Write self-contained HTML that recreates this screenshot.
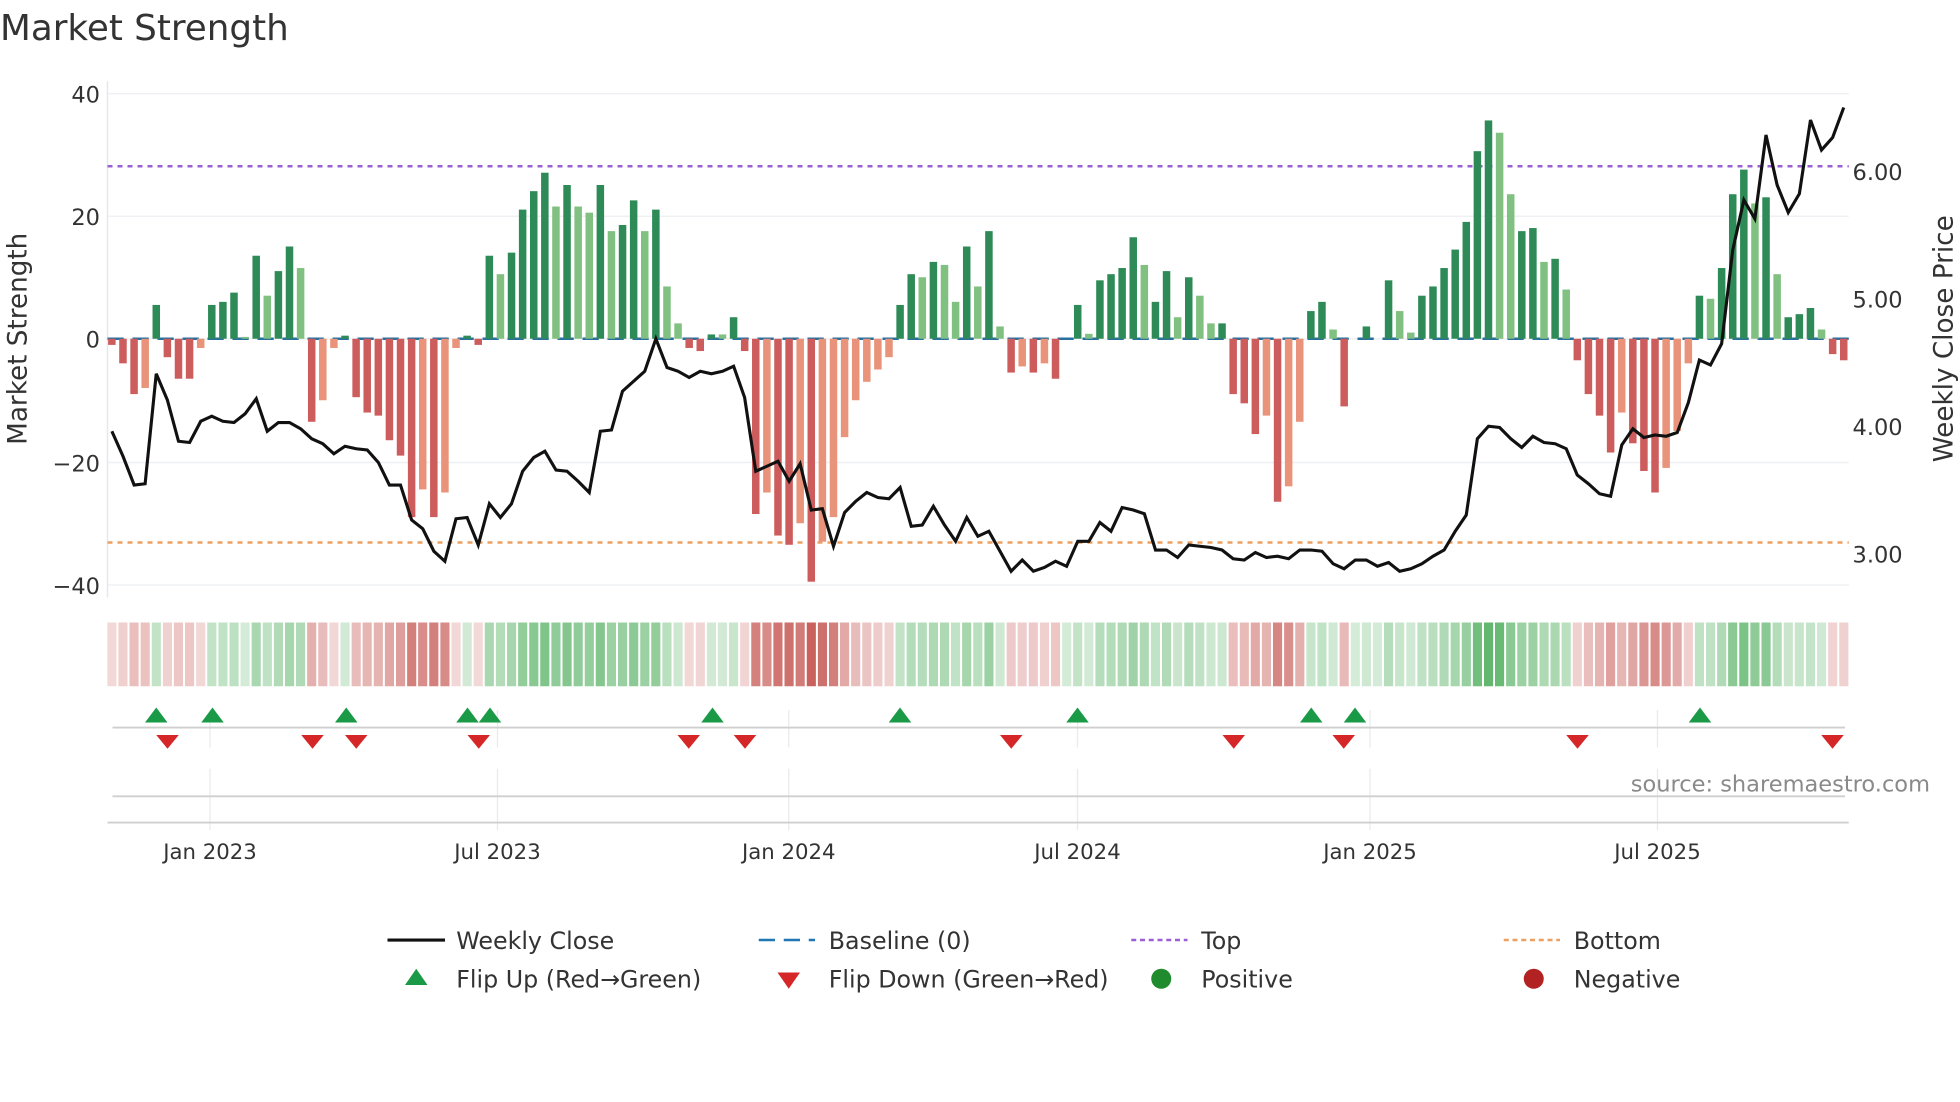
<!DOCTYPE html>
<html><head><meta charset="utf-8"><style>
html,body{margin:0;padding:0;background:#fff;width:1960px;height:1102px;overflow:hidden}
svg{display:block}
text{font-family:"DejaVu Sans","Liberation Sans",sans-serif;fill:#333}
</style></head><body>
<svg id="s" width="1960" height="1102" viewBox="0 0 1568 881.6" xmlns="http://www.w3.org/2000/svg">
<text x="0" y="32" font-size="28.5" textLength="231" lengthAdjust="spacingAndGlyphs">Market Strength</text>
<g id="grid"></g>
<g id="bars"></g>
<g id="heat"></g>
<g id="mk"></g>
<text x="1544" y="633" font-size="18" text-anchor="end" style="fill:#8a8a8a">source: sharemaestro.com</text>
<text transform="translate(21,271) rotate(-90)" font-size="21" text-anchor="middle">Market Strength</text>
<text transform="translate(1562,271) rotate(-90)" font-size="21" text-anchor="middle">Weekly Close Price</text>
<g font-size="18" text-anchor="end">
<text x="80" y="82">40</text><text x="80" y="180">20</text><text x="80" y="278">0</text><text x="80" y="377">−20</text><text x="80" y="475">−40</text>
</g>
<g font-size="18">
<text x="1482" y="144">6.00</text><text x="1482" y="246">5.00</text><text x="1482" y="348">4.00</text><text x="1482" y="450">3.00</text>
</g>
<g font-size="17" text-anchor="middle">
<text x="168" y="687">Jan 2023</text><text x="398" y="687">Jul 2023</text><text x="631" y="687">Jan 2024</text><text x="862" y="687">Jul 2024</text><text x="1096" y="687">Jan 2025</text><text x="1326" y="687">Jul 2025</text>
</g>
<g font-size="19">
<line x1="310" y1="752" x2="356" y2="752" stroke="#111" stroke-width="2.5"/><text x="365" y="759">Weekly Close</text>
<line x1="607" y1="752" x2="652" y2="752" stroke="#1f77b4" stroke-width="2" stroke-dasharray="13,7"/><text x="663" y="759">Baseline (0)</text>
<line x1="905" y1="752" x2="950" y2="752" stroke="#9b5fd6" stroke-width="2" stroke-dasharray="4,3"/><text x="961" y="759">Top</text>
<line x1="1203" y1="752" x2="1248" y2="752" stroke="#eea060" stroke-width="2" stroke-dasharray="4,3"/><text x="1259" y="759">Bottom</text>
<polygon points="324,788 342,788 333,775" fill="#1a9a46"/><text x="365" y="790">Flip Up (Red→Green)</text>
<polygon points="622,778 640,778 631,791" fill="#d62728"/><text x="663" y="790">Flip Down (Green→Red)</text>
<circle cx="929" cy="783" r="8" fill="#1f8b2c"/><text x="961" y="790">Positive</text>
<circle cx="1227" cy="783" r="8" fill="#b22222"/><text x="1259" y="790">Negative</text>
</g>
</svg>
<script>
var v=[-1,-4,-9,-8,5.5,-3,-6.5,-6.5,-1.5,5.5,6,7.5,0.3,13.5,7,11,15,11.5,-13.5,-10,-1.5,0.5,-9.5,-12,-12.5,-16.5,-19,-29,-24.5,-29,-25,-1.5,0.5,-1,13.5,10.5,14,21,24,27,21.5,25,21.5,20.5,25,17.5,18.5,22.5,17.5,21,8.5,2.5,-1.5,-2,0.7,0.7,3.5,-2,-28.5,-25,-32,-33.5,-30,-39.5,-33,-29,-16,-10,-7,-5,-3,5.5,10.5,10,12.5,12,6,15,8.5,17.5,2,-5.5,-4.5,-5.5,-4,-6.5,0,5.5,0.8,9.5,10.5,11.5,16.5,12,6,11,3.5,10,7,2.5,2.5,-9,-10.5,-15.5,-12.5,-26.5,-24,-13.5,4.5,6,1.5,-11,0,2,0,9.5,4.5,1,7,8.5,11.5,14.5,19,30.5,35.5,33.5,23.5,17.5,18,12.5,13,8,-3.5,-9,-12.5,-18.5,-12,-17,-21.5,-25,-21,-15,-4,7,6.5,11.5,23.5,27.5,22,23,10.5,3.5,4,5,1.5,-2.5,-3.5];
var light={3:1,8:1,12:1,14:1,17:1,19:1,20:1,28:1,30:1,31:1,35:1,40:1,42:1,43:1,45:1,48:1,50:1,51:1,55:1,59:1,62:1,64:1,65:1,66:1,67:1,68:1,69:1,70:1,73:1,75:1,76:1,78:1,80:1,82:1,84:1,88:1,93:1,96:1,98:1,99:1,104:1,106:1,107:1,110:1,116:1,117:1,125:1,126:1,129:1,131:1,136:1,140:1,141:1,142:1,144:1,148:1,150:1,154:1};
var py=[345,365,388,387,299,320,353,354,337,333,337,338,331,319,345,338,338,343,351,355,363,357,359,360,370,388,388,416,423,441,449,415,414,436,403,414,403,377,366,361,376,377,385,394,345,344,313,305,297,271,294,297,302,297,299,297,293,318,377,373,369,385,371,408,407,437,410,401,394,398,399,390,421,420,405,420,433,414,429,425,441,457,448,457,454,449,453,433,433,418,425,406,408,411,440,440,446,436,437,438,440,447,448,442,446,445,447,440,440,441,451,455,448,448,453,450,457,455,451,445,440,425,412,351,341,342,351,358,349,354,355,359,380,387,395,397,356,343,350,348,349,346,322,288,292,275,200,160,175,108,148,170,155,96,120,110,86];
var N=v.length,x0=89.5,dx=(1475-89.5)/(N-1),z=271,k=4.92;
var ns="http://www.w3.org/2000/svg";
function el(p,t,a){var e=document.createElementNS(ns,t);for(var q in a)e.setAttribute(q,a[q]);document.getElementById(p).appendChild(e);return e;}
[75,173,271,370,468].forEach(function(y){el('grid','line',{x1:86,x2:1479,y1:y,y2:y,stroke:'#eef0f4','stroke-width':1.2});});
el('grid','line',{x1:86,x2:86,y1:65,y2:478,stroke:'#e6e8ec','stroke-width':1.2});
[168,398,631,862,1096,1326].forEach(function(x){el('grid','line',{x1:x,x2:x,y1:568,y2:598,stroke:'#e8eaee','stroke-width':1});el('grid','line',{x1:x,x2:x,y1:615,y2:664,stroke:'#e8eaee','stroke-width':1});});
el('grid','line',{x1:90,x2:1476,y1:582,y2:582,stroke:'#cfcfcf','stroke-width':1.5});
el('grid','line',{x1:90,x2:1476,y1:637,y2:637,stroke:'#cfcfcf','stroke-width':1.5});
el('grid','line',{x1:86,x2:1479,y1:658,y2:658,stroke:'#cfcfcf','stroke-width':1.5});
el('bars','line',{x1:86,x2:1479,y1:133,y2:133,stroke:'#9b5fd6','stroke-width':2,'stroke-dasharray':'4,4'});
el('bars','line',{x1:86,x2:1479,y1:434,y2:434,stroke:'#eea060','stroke-width':2,'stroke-dasharray':'4,4'});
el('bars','line',{x1:86,x2:1479,y1:z,y2:z,stroke:'#2a6f9e','stroke-width':2,'stroke-dasharray':'13,7'});
var pts=[];
for(var i=0;i<N;i++){var x=x0+i*dx,h=v[i]*k,c;
 if(v[i]>=0)c=light[i]?'#80c080':'#2e8b57';else c=light[i]?'#e8937a':'#cd5c5c';
 if(Math.abs(h)>0.3)el('bars','rect',{x:x-3,y:h>0?z-h:z,width:6,height:Math.abs(h),fill:c});
 pts.push(x.toFixed(1)+','+py[i]);
 var a=Math.min(1,Math.abs(v[i])/38),hc;
 if(v[i]>=0)hc='rgba(60,165,75,'+(0.22+0.62*a).toFixed(2)+')';else hc='rgba(195,80,75,'+(0.2+0.7*a).toFixed(2)+')';
 el('heat','rect',{x:(x-dx/2+0.8).toFixed(1),y:498,width:(dx-1.6).toFixed(1),height:51,fill:hc});
}
el('bars','polyline',{points:pts.join(' '),fill:'none',stroke:'#111','stroke-width':2.5,'stroke-linejoin':'miter'});
[125,170,277,374,392,570,720,862,1049,1084,1360].forEach(function(x){el('mk','polygon',{points:(x-9)+',578 '+(x+9)+',578 '+x+',566',fill:'#1a9a46'});});
[134,250,285,383,551,596,809,987,1075,1262,1466].forEach(function(x){el('mk','polygon',{points:(x-9)+',588 '+(x+9)+',588 '+x+',599',fill:'#d62728'});});
</script>
</body></html>
